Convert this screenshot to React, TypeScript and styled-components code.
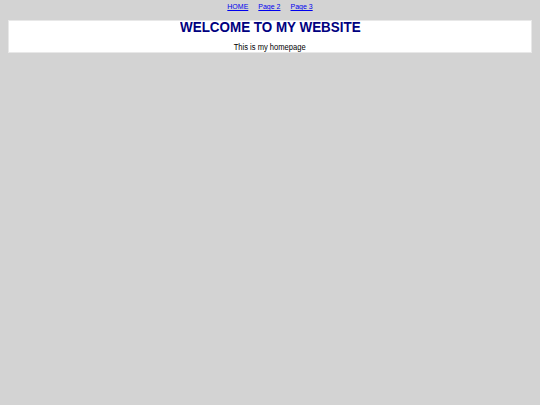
import styled, { createGlobalStyle } from "styled-components";

const GlobalStyle = createGlobalStyle`
    html, body {
        margin: 0;
        padding: 0;
        background: #d3d3d3;
        font-family: "Liberation Sans", Arial, sans-serif;
    }
`;

const Page = styled.div`
    padding: 0 8px;
`;

const Nav = styled.nav`
    display: flex;
    justify-content: center;
    gap: 10px;
    height: 20px;
    box-sizing: border-box;
    padding-top: 2px;
    font-size: 7px;
    line-height: 9px;

    a {
        color: #0000ee;
        text-decoration: underline;
    }
`;

const Banner = styled.header`
    background: #fff;
    border: 1px solid #e8e8e8;
    padding: 0;
    text-align: center;
`;

/* the original type is a condensed face, so squeeze it sideways */
const Condensed = styled.span<{ $squeeze: number }>`
    display: inline-block;
    transform: scaleX(${(p) => p.$squeeze});
    white-space: nowrap;
`;

const Title = styled.h1`
    margin: -2px 0 0;
    font-size: 15.5px;
    line-height: 15.5px;
    font-weight: bold;
    color: #000080;
`;

const Intro = styled.p`
    margin: 7.8px 0 0;
    font-size: 9.2px;
    line-height: 10px;
    color: #000;
`;

export default function App() {
    return (
        <Page>
            <GlobalStyle />
            <Nav>
                <a href="#">HOME</a>
                <a href="#">Page 2</a>
                <a href="#">Page 3</a>
            </Nav>
            <Banner>
                <Title>
                    <Condensed $squeeze={0.865}>WELCOME TO MY WEBSITE</Condensed>
                </Title>
                <Intro>
                    <Condensed $squeeze={0.824}>This is my homepage</Condensed>
                </Intro>
            </Banner>
        </Page>
    );
}
